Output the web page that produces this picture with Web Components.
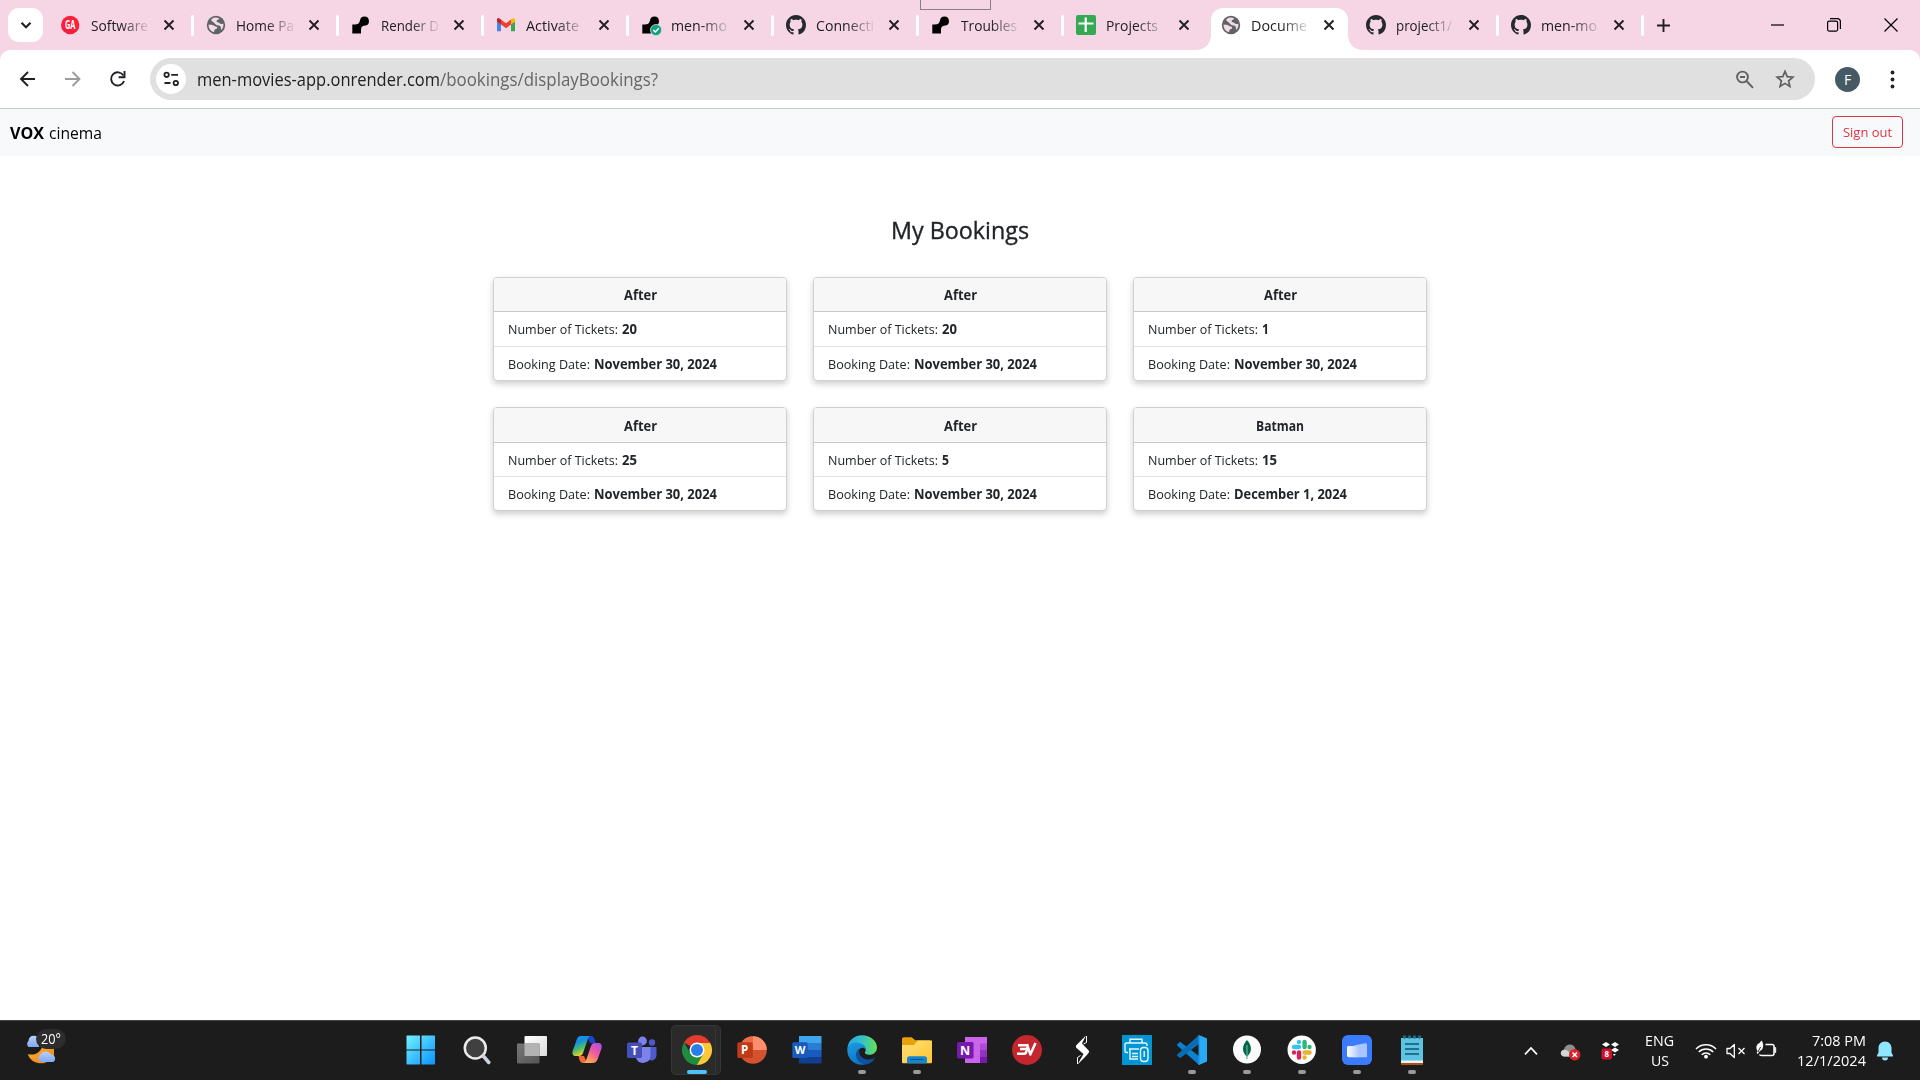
<!DOCTYPE html>
<html lang="en">
<head>
<meta charset="utf-8">
<title>My Bookings</title>
<style>
html,body{margin:0;height:100%;overflow:hidden;background:#fff;font-family:"Open Sans","Noto Sans",sans-serif;color:#212529}
</style>
</head>
<body>
<desktop-screen>
  <tab-strip slot="window">
    <browser-tab icon="ga" w="57">Software</browser-tab>
    <browser-tab icon="globe" w="58">Home Pa</browser-tab>
    <browser-tab icon="render" w="58">Render D</browser-tab>
    <browser-tab icon="gmail" w="53">Activate</browser-tab>
    <browser-tab icon="rendercheck" w="56">men-mo</browser-tab>
    <browser-tab icon="github" w="58">Connecti</browser-tab>
    <browser-tab icon="render" w="56">Troubles</browser-tab>
    <browser-tab icon="sheets" w="52" last>Projects</browser-tab>
    <browser-tab icon="globe" w="56" active>Docume</browser-tab>
    <browser-tab icon="github" w="56">project1/</browser-tab>
    <browser-tab icon="github" w="56">men-mo</browser-tab>
  </tab-strip>
  <browser-toolbar slot="window"></browser-toolbar>
  <site-nav slot="window"></site-nav>
  <bookings-page slot="window">
    <booking-card movie="After" mw="33" tickets="20" tw="15" date="November 30, 2024" dw="123"></booking-card>
    <booking-card movie="After" mw="33" tickets="20" tw="15" date="November 30, 2024" dw="123"></booking-card>
    <booking-card movie="After" mw="33" tickets="1" tw="7" date="November 30, 2024" dw="123"></booking-card>
    <booking-card low movie="After" mw="33" tickets="25" tw="15" date="November 30, 2024" dw="123"></booking-card>
    <booking-card low movie="After" mw="33" tickets="5" tw="7" date="November 30, 2024" dw="123"></booking-card>
    <booking-card low movie="Batman" mw="48" tickets="15" tw="15" date="December 1, 2024" dw="113"></booking-card>
  </bookings-page>
  <task-bar slot="taskbar"></task-bar>
</desktop-screen>

<script>
const GITHUB = '<path fill="#24292f" d="M8 0C3.58 0 0 3.58 0 8c0 3.54 2.29 6.53 5.47 7.59.4.07.55-.17.55-.38 0-.19-.01-.82-.01-1.49-2.01.37-2.53-.49-2.69-.94-.09-.23-.48-.94-.82-1.13-.28-.15-.68-.52-.01-.53.63-.01 1.08.58 1.23.82.72 1.21 1.87.87 2.33.66.07-.52.28-.87.51-1.07-1.78-.2-3.64-.89-3.64-3.95 0-.87.31-1.59.82-2.15-.08-.2-.36-1.02.08-2.12 0 0 .67-.21 2.2.82.64-.18 1.32-.27 2-.27s1.36.09 2 .27c1.53-1.04 2.2-.82 2.2-.82.44 1.1.16 1.92.08 2.12.51.56.82 1.27.82 2.15 0 3.07-1.87 3.75-3.65 3.95.29.25.54.73.54 1.48 0 1.07-.01 1.93-.01 2.2 0 .21.15.46.55.38A8.01 8.01 0 0 0 16 8c0-4.42-3.58-8-8-8z"/>';
const RENDER = '<path d="M1.300 9.500h2.700c2.600 0 4.200-1 5-4A4.500 4.500 0 1 1 14.500 10.500c-2.600 0-4.500 1-4.500 4V18.500H1.300z"/>';
const LETTER = 'font-family="Open Sans,sans-serif" font-weight="700" text-anchor="middle" fill="#fff"';
/* name: [width, height, viewBox, markup] */
const ICONS = {
  ga:[20,20,'0 0 20 20',`<circle cx="9.200" cy="10" r="9.200" fill="#f8203d"/><text x="9.200" y="14.400" ${LETTER} font-size="12" textLength="10.500" lengthAdjust="spacingAndGlyphs">GA</text>`],
  globe:[20,20,'0 0 20 20','<circle cx="10" cy="10" r="9.200" fill="#5f6368"/><path fill="#f3dbe5" d="M2.600 9.500c2 .2 4.200.3 5.400 1.300 1 .8 2.800.3 3.200 1.700.3 1.400-1.200 1.300-2.200 2-.9.700-.6 1.900-1 2.800C4.800 16.300 2.400 13.400 2.600 9.500zM9 2.600c1.500 0 3 .2 4.300 1-.3 1.300-1.900 1-2.500 2-.7 1.200.5 1.900 1.700 2 .9.200 1.300 1.200 2.300 1.300 1 .2 1.600-.4 2.600-.2.300 2.500-.7 4.800-2.200 6.300-.6-1.500.1-2.600-.8-3.800-1-1.200-2.700-.7-4-1.300C8.600 9 8.200 7.600 7 6.800c-1-.6-1.400-.9-1.900-1.800C6.100 3.700 7.500 2.900 9 2.600z"/>'],
  render:[20,20,'0 0 20 20',RENDER],
  rendercheck:[20,20,'0 0 20 20',RENDER+'<circle cx="15" cy="15" r="5.600" fill="#0fa37f" stroke="#f6d5e4" stroke-width=".7"/><path d="M12.300 15l2 2 3.500-3.700" fill="none" stroke="#fff" stroke-width="1.500"/>'],
  gmail:[20,20,'0 0 20 20','<path fill="#4285f4" d="M1 5v11.200h4V8z"/><path fill="#34a853" d="M15 8v8.200h4V5z"/><path fill="#fbbc04" d="M15 4.500l2.200-1.300c1-.4 1.800.4 1.800 1.400V6.500l-4 3z"/><path fill="#ea4335" d="M5 9.500v-5l5 3.800 5-3.800v5l-5 3.700z"/><path fill="#c5221f" d="M1 6.500V4.600C1 3.400 2.200 2.600 3.200 3.200L5 4.500v5z"/>'],
  github:[20,20,'0 0 16 16',GITHUB],
  sheets:[20,20,'0 0 20 20','<rect width="20" height="20" rx="2" fill="#34a853"/><path stroke="#fff" stroke-width="2.200" d="M2.500 8.500h15M9.700 2.500v14.500"/>'],
  x:[12,12,'0 0 12 12','<path d="M1.500 1.500l9 9M10.500 1.500l-9 9" stroke="#1f1f24" stroke-width="1.900"/>'],
  down:[14,14,'0 0 14 14','<path d="M2.500 4.800L7 9.200l4.500-4.400" fill="none" stroke="#202124" stroke-width="2.200"/>'],
  plus:[13,13,'0 0 13 13','<path d="M6.500 0v13M0 6.500h13" stroke="#1f1f1f" stroke-width="1.900"/>'],
  min:[14,14,'0 0 14 14','<path d="M1 7h13" stroke="#000" stroke-width="1.200"/>'],
  restore:[14,14,'0 0 14 14','<rect x=".6" y="3.100" width="10" height="10" rx="1.500" fill="none" stroke="#000" stroke-width="1.200"/><path d="M3 .7h7.500a2.800 2.800 0 0 1 2.900 2.800V11" fill="none" stroke="#000" stroke-width="1.200"/>'],
  close:[14,14,'0 0 14 14','<path d="M.5.5l13 13M13.500.5l-13 13" stroke="#000" stroke-width="1.200"/>'],
  back:[16,16,'0 0 16 16','<path d="M15 8H1.500M8 1L1 8l7 7" fill="none" stroke="#202124" stroke-width="1.900"/>'],
  fwd:[16,16,'0 0 16 16','<path d="M0 8h14.500M7.500 1l7 7-7 7" fill="none" stroke="#9b9b9d" stroke-width="1.900"/>'],
  reload:[16,16,'0 0 16 16','<path d="M14 10a6.600 6.600 0 1 1-.6-5.500" fill="none" stroke="#202124" stroke-width="1.900"/><path d="M14.500 0v6.200H8.600" fill="none" stroke="#202124" stroke-width="1.900"/>'],
  tune:[16,16,'0 0 16 16','<g fill="none" stroke="#202124" stroke-width="1.800"><circle cx="3.600" cy="3.800" r="2.200"/><path d="M8.200 3.800H15M1.500 12h6"/><circle cx="12.800" cy="12" r="2.200"/></g>'],
  zoomout:[18,19,'0 0 18 19','<circle cx="6.500" cy="7" r="5.400" fill="none" stroke="#5f6062" stroke-width="1.900"/><path d="M4 7h5M10.500 11l6.500 6.800" stroke="#5f6062" stroke-width="1.900"/>'],
  star:[20,20,'0 0 20 20','<path d="M10 2.400l2.200 5.200 5.700.5-4.300 3.700 1.300 5.600-4.900-3-4.900 3 1.300-5.600L2.100 8.100l5.700-.5z" fill="none" stroke="#5f6062" stroke-width="1.700"/>'],
  dots:[5,19,'0 0 5 19','<g fill="#202124"><circle cx="2.500" cy="2.500" r="1.900"/><circle cx="2.500" cy="9.500" r="1.900"/><circle cx="2.500" cy="16.500" r="1.900"/></g>'],
  weather:[32,30,'0 0 32 30','<defs><linearGradient id="m" y2="1"><stop stop-color="#ffb52b"/><stop offset="1" stop-color="#f27a1c"/></linearGradient><linearGradient id="c" x2="0" y2="1"><stop stop-color="#b7d0fb"/><stop offset="1" stop-color="#7fa9ef"/></linearGradient></defs><path d="M29 12v8c-3 6-9 9.500-16 8-5-1-9-4.500-10-9 6 2 12-1 14-7z" fill="url(#m)"/><path d="M3.500 12a4 4 0 0 1 0-6A5.500 5.500 0 0 1 14 4v8z" fill="url(#c)"/><path d="M16 27a4.200 4.200 0 0 1-.5-7.500 6 6 0 0 1 10.500 0A4 4 0 0 1 28 27z" fill="url(#c)"/>'],
  start:[30,30,'0 0 30 30','<defs><linearGradient id="s" x1="0" y1="0" x2="29" y2="29" gradientUnits="userSpaceOnUse"><stop stop-color="#76f3ff"/><stop offset="1" stop-color="#0a94ff"/></linearGradient></defs><path fill="url(#s)" d="M1 .5h13v14H.5V1zM15.500.5h13l.5.5v13.500H15.500zM.5 15.500h13.500v14H1l-.5-.5zM15.500 15.500H29V29l-.5.500H15.500z"/>'],
  search:[30,30,'0 0 30 30','<g transform="translate(.8)"><circle cx="12.500" cy="13" r="10.500" fill="#404040" stroke="#e9ebee" stroke-width="2.500"/><path d="M20.500 21l5.500 6.500" stroke="#cdd3da" stroke-width="3.500" stroke-linecap="round"/></g>'],
  taskview:[30,30,'0 0 30 30','<defs><linearGradient id="a" x2="1" y2="1"><stop stop-color="#fff"/><stop offset="1" stop-color="#ddd"/></linearGradient><linearGradient id="b" x2="1" y2="1"><stop stop-color="#777"/><stop offset="1" stop-color="#555"/></linearGradient></defs><rect x="7.500" y="1" width="22.500" height="20" rx="1" fill="url(#a)"/><rect y="8.500" width="22.500" height="20" rx="1" fill="url(#b)"/><path d="M7.500 8.500h15V21h-15z" fill="#b3b3b3"/>'],
  copilot:[30,30,'0 0 30 30','<defs><linearGradient id="a" x2=".4" y2="1"><stop stop-color="#18a6ee"/><stop offset=".35" stop-color="#158ce0"/><stop offset=".65" stop-color="#3fbb79"/><stop offset="1" stop-color="#ffd21e"/></linearGradient><linearGradient id="b" x1="1" x2=".3" y2="1"><stop stop-color="#a44cf2"/><stop offset=".5" stop-color="#ef5aa0"/><stop offset="1" stop-color="#ffae4a"/></linearGradient></defs><path d="M15 1h4c2.300 0 3 1.300 3.800 4l.8 3H18z" fill="#1b45cf"/><path d="M15 28h-4c-2 0-3-1.500-3.800-4l-.7-3H12z" fill="#f4693a"/><path d="M9.500 1H19c-2 0-2.800 1.800-3.500 4L11 18c-.8 2-1.800 3-4 3H3.500C.5 21 0 18.500.8 15.500l4-11C5.700 2 7 1 9.500 1z" fill="url(#a)"/><path d="M20.500 28H11c2 0 2.800-1.800 3.500-4L19 11c.8-2 1.800-3 4-3h3.500c3 0 3.700 2.500 3 5.500l-4 11C24.500 27 23 28 20.500 28z" fill="url(#b)"/>'],
  teams:[30,30,'0 0 30 30',`<circle cx="25" cy="7.500" r="3.200" fill="#5059c9"/><path d="M20 12h9.500v8.500a5 5 0 0 1-8 4z" fill="#5059c9"/><circle cx="15.500" cy="6" r="4.400" fill="#7b83eb"/><path d="M9 12h14.500v9a7.500 7.500 0 0 1-14.500 2z" fill="#7b83eb"/><rect y="7.500" width="15" height="15.500" rx="1.500" fill="#464fb8"/><text x="7.500" y="19.500" ${LETTER} font-size="12">T</text>`],
  chrome:[30,30,'0 0 30 30','<path d="M2 7.500A15 15 0 0 1 28 7.500L15 15z" fill="#e33b2e"/><path d="M28 7.500A15 15 0 0 1 15 30L15 15l-1-7.500z" fill="#fcc934"/><path d="M15 30A15 15 0 0 1 2 7.500l6.500 11 6.500 3.500 6.500-3.500z" fill="#1e8e3e"/><path d="M2 7.500h26" stroke="#e33b2e" stroke-width="1"/><circle cx="15" cy="15" r="7.500" fill="#fff"/><circle cx="15" cy="15" r="6" fill="#2b7de9"/>'],
  ppt:[30,30,'0 0 30 30',`<circle cx="16" cy="15" r="13.800" fill="#d35230"/><path d="M16 1.200A13.800 13.800 0 0 1 29.800 15H16z" fill="#ff8f6b"/><path d="M16 1.200V15H2.200A13.800 13.800 0 0 1 16 1.200z" fill="#ed6c47"/><rect x=".3" y="7.300" width="15.500" height="15.800" rx="1.500" fill="#bf3a17"/><text x="7.700" y="19.200" ${LETTER} font-size="11.500">P</text>`],
  word:[30,30,'0 0 30 30',`<path d="M7 1h22.500v7.500H7z" fill="#41a5ee"/><path d="M7 8h22.500v7.500H7z" fill="#2b7cd3"/><path d="M7 15h22.500v7H7z" fill="#185abd"/><path d="M7 22h22.500v6.500H7z" fill="#103f91"/><rect x=".3" y="7.300" width="15.500" height="15.800" rx="1.500" fill="#185abd"/><text x="8" y="19" ${LETTER} font-size="11">W</text>`],
  edge:[30,30,'0 0 30 30','<defs><linearGradient id="a" x2="1"><stop stop-color="#2aa7e8"/><stop offset=".5" stop-color="#35c1c8"/><stop offset="1" stop-color="#66e04f"/></linearGradient><linearGradient id="b" x2=".5" y2="1"><stop stop-color="#1b9de2"/><stop offset="1" stop-color="#1272c4"/></linearGradient></defs><path d="M.5 13C1 6 7 .3 15 .3 23.500.3 30 6 30 12.500c0 4.500-3.500 7.300-7.500 7.300-3.500 0-5-1.200-4.600-2.300.5-1 .8-1.500.8-2.700 0-3-3-5.800-7.500-5.800C6.500 9 3 10 .5 13z" fill="url(#a)"/><path d="M.3 15C.3 9.500 5 7.500 9 7.500c5 0 9.500 3 9.700 7C17 12 13 12 11.500 15.500 9 21 14 27.500 20 28c-2 1.500-3.500 1.800-5.500 1.800C6 29.500.3 23 .3 15z" fill="url(#b)"/><path d="M12.500 13.500c-2 6 2.500 11 9 11 3 0 5-1 6.500-2-2 4.500-5.500 6.500-9 7C12 28.500 8.500 24 9 19c.2-2.500 1.500-4.500 3.500-5.500z" fill="#10519e"/>'],
  folder:[30,30,'0 0 30 30','<defs><linearGradient id="a" x2="1" y2="1"><stop stop-color="#ffe07a"/><stop offset="1" stop-color="#ffc52e"/></linearGradient></defs><path d="M0 4c0-1 .7-1.700 1.700-1.700h8l3.500 2.900H28V12H0z" fill="#e6a208"/><path d="M0 10h12l3.500-4.500H30V27c0 .8-.6 1.300-1.300 1.300H1.300C.6 28.300 0 27.800 0 27z" fill="url(#a)"/><path d="M5 28.300V24c0-2 1-2.800 2.500-2.800h15c1.700 0 2.500.8 2.500 2.800v4.300z" fill="#1486d4"/><path d="M9 24.500h12" stroke="#0a4f8e" stroke-width="1.200" stroke-linecap="round"/>'],
  onenote:[30,30,'0 0 30 30',`<path d="M8 2h22v26H8z" fill="#ca64ea"/><path d="M23 8.500h7V15h-7z" fill="#ae4bd5"/><path d="M23 15h7v6.500h-7z" fill="#9332bf"/><path d="M23 21.500h7V28h-7z" fill="#7719aa"/><rect y="7" width="16.500" height="16.500" rx="1.500" fill="#7719aa"/><text x="8.200" y="19.500" ${LETTER} font-size="12.500">N</text>`],
  express:[30,30,'0 0 30 30','<circle cx="15" cy="15" r="15" fill="#c4262e"/><path d="M6 10.200h8.700c1.300 0 1 3.900-.9 3.900H8M13.800 14.100c1.300 0 .7 4.600-1.500 4.600H5M15 9l3.300 10.500L23.500 8" fill="none" stroke="#fff" stroke-width="2.500" stroke-linejoin="round"/>'],
  bolt:[30,30,'0 0 30 30','<path d="M19 .5l-9.500 9.500c-.8 1-.8 2 0 3l7 6-6 10.500 8.500-8.500 2.500-3c.8-1 .8-2-.3-3L15 8.500z" fill="#fff"/><path d="M19.500 1v6.500l-3 1.500M10.500 29v-6.500l3-2" stroke="#fff" stroke-width="1" fill="none"/>'],
  printer:[30,30,'0 0 30 30','<rect width="30" height="30" fill="#0096d6"/><g fill="none" stroke="#e8f7ff" stroke-width="1.400"><path d="M8 7.500V4.200h12v3.300M6 17.500H4.500A1.500 1.500 0 0 1 3 16V9.500C3 8.500 4 8 5 8h18c1 0 2 .8 2 2v1M7 14h10M8 14v10h8M10 18.500h6M10 21.500h6"/><rect x="18.500" y="12.500" width="7.500" height="14" rx="3"/><path d="M22.200 16v6"/></g>'],
  vscode:[30,30,'0 0 30 30','<path d="M22 0l8 3.500v23L22 30z" fill="#2aa9f5"/><path d="M22 30L0.500 10.800c-.6-.5-.6-1.300 0-1.800L2.300 7.400c.5-.4 1.200-.4 1.700 0L22 21z" fill="#0b82cf"/><path d="M22 0L.5 19.200c-.6.5-.6 1.300 0 1.800l1.800 1.600c.5.400 1.200.4 1.700 0L22 9z" fill="#0a6cb5"/><path d="M21.500.5L23 1v28l-1.500.5z" fill="#1f9cf0"/>'],
  mongo:[30,30,'0 0 30 30','<circle cx="15" cy="14.500" r="14" fill="#fafafa"/><path d="M15 5c5 5.500 5.500 11.500.3 16.500V24h-.7v-2.500C9.500 16.500 10 10.500 15 5z" fill="#00684a"/><path d="M15 10v13" stroke="#c2d7ce" stroke-width=".7"/>'],
  slack:[30,30,'0 0 30 30','<circle cx="14.700" cy="14.700" r="14.200" fill="#fff"/><g stroke-width="4.400" stroke-linecap="round"><path d="M12 7h0M7 12h5" stroke="#36c5f0"/><path d="M22.500 12h0M17.600 7v5" stroke="#2eb67d"/><path d="M17.600 22.500h0M17.600 17.500h5" stroke="#ecb22e"/><path d="M7 17.500h0M12 17.500v5" stroke="#e01e5a"/></g>'],
  zoomwp:[30,30,'0 0 30 30','<defs><linearGradient id="a" x2="1"><stop stop-color="#fff"/><stop offset="1" stop-color="#a9c5ff"/></linearGradient></defs><rect width="30" height="30" rx="6" fill="#3b7cff"/><path d="M12 10.500l11-2.300c1.200-.2 2 .3 2 1.500v12.500H12z" fill="#a9c6ff"/><path d="M5 12.500c0-1 .5-1.500 1.500-1.500H15c1.500 0 2 .8 2 2v9.200H7c-1.300 0-2-.7-2-2z" fill="url(#a)"/>'],
  notepad:[30,30,'0 0 30 30','<path d="M4 3h22v26H4z" fill="#5cc3e3"/><path d="M4 25.500h22V28H4z" fill="#f0f0f0"/><path d="M4 28h22v2H4z" fill="#a65214"/><path d="M8 9h14M8 14h14M8 19h14" stroke="#12546c" stroke-width="1.600"/><g fill="#1b6a80"><circle cx="7.500" cy="2" r="1.800"/><circle cx="12.500" cy="2" r="1.800"/><circle cx="17.500" cy="2" r="1.800"/><circle cx="22.500" cy="2" r="1.800"/></g>'],
  chevup:[14,10,'0 0 14 10','<path d="M1 8.300L7 2l6 6.300" fill="none" stroke="#fff" stroke-width="1.700"/>'],
  cloud:[21,18,'0 0 21 18','<path d="M4 13.500C0 12.500 0 7 4 6.500 5.500 0 14 0 15.500 6L17 9l-4 4.500z" fill="#8f8f8f"/><path d="M4 13.500C-.5 13 0 7.500 3.500 7c2-.5 4 .5 5.500 2l3 4.500z" fill="#d4d4d4"/><circle cx="14.700" cy="11.700" r="5.700" fill="#d9222a"/><path d="M12.500 9.500l4.500 4.500M17 9.500L12.500 14" stroke="#fff" stroke-width="1.500"/>'],
  dropbox:[19,19,'0 0 19 19',`<g fill="#fff"><path d="M5 1l4 2.500L5 6 1 3.500zM14 1l4 2.500L14 6l-4-2.500zM14 6.500L18 9l-4 2.500L10 9zM12 13h3l-2 2z"/></g><rect x=".5" y="7.500" width="10.500" height="11" rx="2.200" fill="#d0112b"/><text x="5.700" y="16.100" ${LETTER} font-size="8">8</text>`],
  wifi:[22,17,'0 0 22 17','<g fill="none" stroke="#fff" stroke-width="1.500"><path d="M1 7a14 14 0 0 1 20 0M3.800 10a10 10 0 0 1 14.400 0M6.700 12.800a6 6 0 0 1 8.600 0"/></g><circle cx="11" cy="14.700" r="1.900" fill="#fff"/>'],
  mute:[20,16,'0 0 20 16','<path d="M1 5.500h3L8.300 1.500v13L4 10.500H1z" fill="none" stroke="#fff" stroke-width="1.300" stroke-linejoin="round"/><path d="M12.500 5l6 6M18.500 5l-6 6" stroke="#fff" stroke-width="1.300"/>'],
  battery:[21,18,'0 0 21 18','<path d="M9.500 4.500h6.500c1.200 0 2 .8 2 2v7c0 1.200-.8 2-2 2H5.500c-1 0-1.700-.3-2-1" fill="none" stroke="#fff" stroke-width="1.500"/><path d="M18.500 7.500h1.300v5h-1.300z" fill="#fff" stroke="#fff" stroke-width=".6"/><path d="M5.500.5c2.500 3 2.500 9-1.500 10.500L1.500 14l-.8-1 .8-2C-1 7 1 4 3.500 3z" fill="#fff"/><path d="M2 12l2.500-5" stroke="#1c1c1c" stroke-width=".9"/>'],
  bell:[18,20,'0 0 18 20','<path d="M9 .5c4 0 6.500 3 6.500 6.500v4.500l1.500 3c.2.700 0 1-.7 1H1.700c-.7 0-.9-.3-.7-1l1.500-3V7C2.500 3.500 5 .5 9 .5zM6 16.500h6a3 3 0 0 1-6 0z" fill="#8fe6ff"/>']
};

class UIElement extends HTMLElement {
  constructor() { super(); this.attachShadow({mode:'open'}); }
  attr(n) { return this.getAttribute(n) || ''; }
  connectedCallback() {
    this.shadowRoot.innerHTML = `<style>:host,*{box-sizing:border-box}${this.styles()}</style>${this.markup()}`;
    this.ready();
  }
  ready() {}
}

customElements.define('ui-icon', class extends UIElement {
  styles() { return ':host{display:block;flex:none}svg{display:block;overflow:visible}'; }
  markup() {
    const [w,h,vb,body] = ICONS[this.attr('name')];
    return `<svg width="${w}" height="${h}" viewBox="${vb}">${body}</svg>`;
  }
});

/* One line of text, condensed or widened so that it spans exactly w pixels. */
customElements.define('fit-text', class extends UIElement {
  styles() { return `:host{display:block;flex:none;white-space:pre;width:${this.attr('w')}px}span{display:inline-block;transform-origin:0 50%}`; }
  markup() { return '<span><slot></slot></span>'; }
  ready() {
    const s = this.shadowRoot.querySelector('span');
    s.style.transform = `scaleX(${(this.attr('w') / s.getBoundingClientRect().width).toFixed(4)})`;
  }
});

customElements.define('desktop-screen', class extends UIElement {
  styles() { return ':host{display:flex;flex-direction:column;width:1920px;height:1080px;overflow:hidden;background:#fff}main{flex:1;display:flex;flex-direction:column;min-height:0}'; }
  markup() { return '<main><slot name="window"></slot></main><slot name="taskbar"></slot>'; }
});

customElements.define('tab-strip', class extends UIElement {
  styles() { return `:host{display:flex;height:50px;background:#f6d5e4;position:relative;flex:none}
    .menu{margin:8px 6px 0 8px;width:35px;height:34px;border-radius:11px;background:#fff;display:grid;place-items:center;flex:none}
    .plus{width:38px;display:grid;place-items:center;height:50px}
    .win{margin-left:auto;display:flex;gap:43px;align-items:center;padding-right:22px;height:49px}
    .grip{position:absolute;left:920px;top:-1px;width:71px;height:11px;border:1px solid #8d7f86}`; }
  markup() { return `<div class="menu"><ui-icon name="down"></ui-icon></div><slot></slot><div class="plus"><ui-icon name="plus"></ui-icon></div>
    <div class="win"><ui-icon name="min"></ui-icon><ui-icon name="restore"></ui-icon><ui-icon name="close"></ui-icon></div><div class="grip"></div>`; }
});

customElements.define('browser-tab', class extends UIElement {
  styles() { const on = this.hasAttribute('active'); return `:host{display:flex;align-items:center;width:145px;height:50px;padding-left:12px;flex:none;position:relative;font-size:15px;color:#202124}
    ui-icon,.t,.c{position:relative}
    .t{margin-left:10px;width:58px;overflow:hidden;line-height:24px;-webkit-mask-image:linear-gradient(90deg,#000 52%,transparent 104%);mask-image:linear-gradient(90deg,#000 52%,transparent 104%)}
    .c{width:40px;display:grid;place-items:center}
    .s{width:3px;height:21px;border-radius:2px;background:${on||this.hasAttribute('last')?'transparent':'#fff'};margin-left:2px}
    .bg{position:absolute;left:2px;top:8px;width:137px;height:42px;border-radius:12px 12px 0 0;background:#fff}
    .bg:before,.bg:after{content:"";position:absolute;bottom:0;width:14px;height:14px}
    .bg:before{left:-14px;background:radial-gradient(circle at 0 0,transparent 13.500px,#fff 14px)}
    .bg:after{right:-14px;background:radial-gradient(circle at 100% 0,transparent 13.500px,#fff 14px)}`; }
  markup() { return `${this.hasAttribute('active')?'<div class="bg"></div>':''}<ui-icon name="${this.attr('icon')}"></ui-icon><div class="t"><fit-text w="${this.attr('w')}">${this.textContent}</fit-text></div><div class="c"><ui-icon name="x"></ui-icon></div><div class="s"></div>`; }
});

customElements.define('browser-toolbar', class extends UIElement {
  styles() { return `:host{display:block;height:59px;flex:none;background:#f6d5e4}
    .bar{display:flex;align-items:center;height:59px;background:#fff;border-bottom:1px solid #c8cacb;border-radius:10px 10px 0 0;padding-left:20px}
    .nav{display:flex;gap:29px;width:130px}
    .omni{display:flex;align-items:center;width:1665px;height:42px;border-radius:21px;background:#e0e0e0;padding:0 20px 0 6px;font-size:18.500px;color:#202124}
    .omni fit-text{margin-top:-1px}
    .site{width:30px;height:30px;border-radius:50%;background:#fff;display:grid;place-items:center;margin-right:11px}
    .path{color:#666}
    .star{margin:0 0 0 21px}
    .sp{flex:1}
    .me{width:25px;height:25px;border-radius:50%;background:#455a64;color:#fff;font-size:14px;line-height:25px;text-align:center;margin:0 30px 0 20px}`; }
  markup() { return `<div class="bar"><div class="nav"><ui-icon name="back"></ui-icon><ui-icon name="fwd"></ui-icon><ui-icon name="reload"></ui-icon></div>
    <div class="omni"><div class="site"><ui-icon name="tune"></ui-icon></div><fit-text w="243">men-movies-app.onrender.com</fit-text><fit-text class="path" w="218">/bookings/displayBookings?</fit-text><div class="sp"></div><ui-icon name="zoomout"></ui-icon><ui-icon class="star" name="star"></ui-icon></div>
    <div class="me">F</div><ui-icon name="dots"></ui-icon></div>`; }
});

customElements.define('site-nav', class extends UIElement {
  styles() { return `:host{display:flex;align-items:center;justify-content:space-between;height:47px;flex:none;background:#f8f9fa;padding:0 17px 0 10px;font-size:16.800px;color:#000}
    .brand{display:flex;gap:5px}b{font-weight:700}
    .out{display:grid;place-items:center;width:71px;height:32px;margin-top:-1px;border:1px solid #dc3545;border-radius:4px;color:#dc3545;font-size:13px}`; }
  markup() { return '<div class="brand"><b><fit-text w="34">VOX</fit-text></b><fit-text w="53">cinema</fit-text></div><div class="out"><fit-text w="49">Sign out</fit-text></div>'; }
});

customElements.define('bookings-page', class extends UIElement {
  styles() { return `:host{display:flex;flex-direction:column;align-items:center;padding-top:56px}
    h1{margin:0 0 29px;font-size:23.500px;line-height:36px;height:36px;font-weight:500;-webkit-text-stroke:.35px #212529}
    .grid{display:grid;grid-template-columns:repeat(3,294px);gap:26px}`; }
  markup() { return '<h1><fit-text w="138">My Bookings</fit-text></h1><div class="grid"><slot></slot></div>'; }
});

customElements.define('booking-card', class extends UIElement {
  styles() { const low = this.hasAttribute('low'); return `:host{display:flex;flex-direction:column;height:104px;border:1px solid #cfd0d1;border-radius:4px;box-shadow:0 3px 6px rgba(0,0,0,.2);background:#fff;font-size:13.500px;line-height:18px;overflow:hidden}
    div{display:flex;align-items:center;padding-left:14px;gap:4px;height:33px}
    .h{height:${low?35:34}px;justify-content:center;padding:1px 0 0;background:#f7f7f7;border-bottom:1px solid #c8c9ca;font-weight:700}
    .n{height:${low?34:35}px;border-bottom:1px solid #dee2e6}`; }
  markup() { return `<div class="h"><fit-text w="${this.attr('mw')}">${this.attr('movie')}</fit-text></div>
    <div class="n"><fit-text w="110">Number of Tickets:</fit-text><b><fit-text w="${this.attr('tw')}">${this.attr('tickets')}</fit-text></b></div>
    <div><fit-text w="82">Booking Date:</fit-text><b><fit-text w="${this.attr('dw')}">${this.attr('date')}</fit-text></b></div>`; }
});

customElements.define('task-button', class extends UIElement {
  styles() { const on = this.hasAttribute('active'); return `:host{display:flex;flex-direction:column;align-items:center;width:55px;height:59px;flex:none;position:relative;padding-top:14px}
    ui-icon{position:relative}
    .ind{margin-top:5px;height:4px;border-radius:2px;width:${on?20:8}px;background:${on?'#4cc2ff':'#9a9a9a'};position:relative}
    .bg,.bk{position:absolute;top:4px;height:50px;border-radius:5px;background:#2a2a2a;border:1px solid #363636}
    .bg{left:2px;width:45px}.bk{left:30px;width:22px}`; }
  markup() { const on = this.hasAttribute('active'); return `${on?'<div class="bk"></div><div class="bg"></div>':''}<ui-icon name="${this.attr('icon')}"></ui-icon>${on||this.hasAttribute('open')?'<div class="ind"></div>':''}`; }
});

customElements.define('task-bar', class extends UIElement {
  styles() { return `:host{display:flex;height:60px;flex:none;background:#1c1c1c;border-top:1px solid #444;color:#fff;font-size:14.800px}
    .w{width:393px;padding:14px 0 0 25px;position:relative}
    .deg{position:absolute;left:36px;top:8px;width:30px;height:20px;border-radius:10px;background:#2d2d2d;line-height:20px;padding-left:5px;font-size:14px}
    .apps{display:flex}
    .start{margin-right:1px}
    .tray{flex:1;display:flex;align-items:center;padding-left:85px}
    .col{display:flex;flex-direction:column;align-items:center;line-height:20px;margin-top:-1px}
    .r{align-items:flex-end}`; }
  markup() {
    const apps = ['search','taskview','copilot','teams','chrome*','ppt','word','edge+','folder+','onenote','express','bolt','printer','vscode+','mongo+','slack+','zoomwp+','notepad+'];
    return `<div class="w"><ui-icon name="weather"></ui-icon><div class="deg"><fit-text w="20">20°</fit-text></div></div>
    <div class="apps"><task-button class="start" icon="start"></task-button>${apps.map(a => `<task-button icon="${a.replace(/[*+]/,'')}"${a.endsWith('*')?' active':a.endsWith('+')?' open':''}></task-button>`).join('')}</div>
    <div class="tray"><ui-icon name="chevup"></ui-icon><ui-icon name="cloud" style="margin-left:22px;margin-top:3px"></ui-icon><ui-icon name="dropbox" style="margin-left:20px"></ui-icon>
      <div class="col" style="margin-left:25px"><fit-text w="29">ENG</fit-text><fit-text w="18">US</fit-text></div>
      <ui-icon name="wifi" style="margin-left:21px"></ui-icon><ui-icon name="mute" style="margin-left:9px"></ui-icon><ui-icon name="battery" style="margin-left:10px;margin-top:-3px"></ui-icon>
      <div class="col r" style="margin-left:20px"><fit-text w="54">7:08 PM</fit-text><fit-text w="69">12/1/2024</fit-text></div><ui-icon name="bell" style="margin-left:10px"></ui-icon></div>`;
  }
});
</script>
</body>
</html>
